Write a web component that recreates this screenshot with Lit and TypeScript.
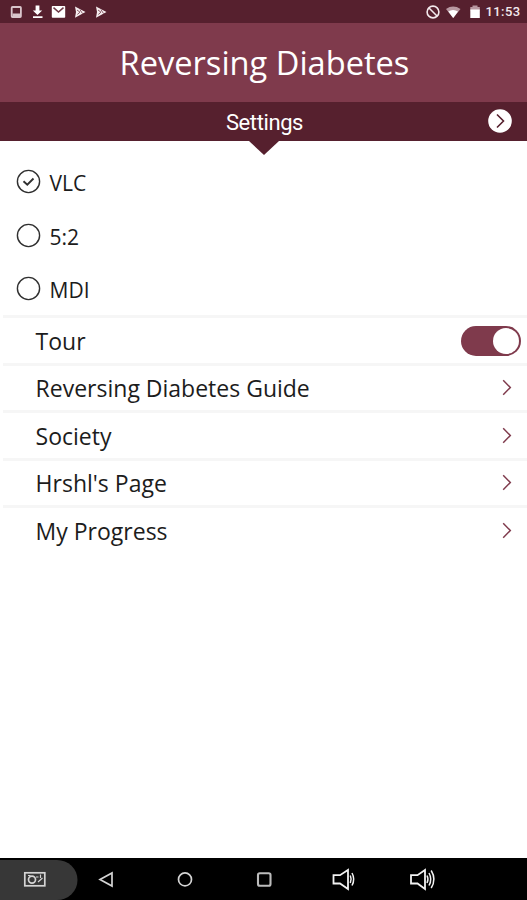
import { LitElement, html, css, svg } from "lit";
import { customElement, state } from "lit/decorators.js";

const chevron = svg`<path d="M1.200 1.300 L8.300 8.500 L1.200 15.700" fill="none" stroke="currentColor" stroke-width="1.5"/>`;

@customElement("status-bar")
class StatusBar extends LitElement {
  static styles = css`
    :host { display: block; height: 23px; background: #56202e; }
    svg { display: block; }
    .time { font: 500 13px Roboto, sans-serif; letter-spacing: 0.35px; fill: #f3e9ec; }
  `;
  render() {
    return html`<svg width="527" height="23" viewBox="0 0 527 23">
      <rect x="11.7" y="7" width="9.2" height="10" rx="0.8" fill="none" stroke="#d9c5cb" stroke-width="1.8"/>
      <path d="M12.500 13.500 h7.500 v2.500 h-7.500z" fill="#d9c5cb"/>
      <path d="M35.6 5.5h3.8v5h2.8l-4.7 4.6-4.7-4.6h2.8z M33 16.2h9.5v1.8H33z" fill="#fff"/>
      <rect x="51.8" y="6" width="13.4" height="11.8" rx="0.8" fill="#fff"/>
      <path d="M53.5 7.6 L58.5 12 L63.5 7.6" fill="none" stroke="#6d3846" stroke-width="1.5"/>
      ${[74.5, 95.5].map((x) => svg`<g transform="translate(${x} 6)">
        <path d="M0.5 0.5 L11 6 L0.5 11.8 L1.5 6z" fill="#f6eef0"/>
        <path d="M2.5 4 L5.5 6.2 L2.8 8.5 M5.5 3.7 L8 7.6" fill="none" stroke="#6d3846" stroke-width="0.8"/>
      </g>`)}
      <circle cx="433" cy="12" r="5.9" fill="none" stroke="#f3e9ec" stroke-width="1.6"/>
      <path d="M429 8 L437 16" stroke="#f3e9ec" stroke-width="1.6"/>
      <path d="M446 9 Q453 4.200 460.500 9 L453.200 18z" fill="#b898a1"/>
      <path d="M448.300 11.500 Q453 8.500 458 11.500 L453.200 18z" fill="#fff"/>
      <path d="M472.500 5.500h5v1.500h2.300v3.500h-9.500v-3.500h2.200z" fill="#b898a1"/>
      <rect x="470.300" y="9.500" width="9.500" height="8.500" fill="#fff"/>
      <text class="time" x="485.500" y="16.300" textLength="35">11:53</text>
    </svg>`;
  }
}

@customElement("nav-bar")
class NavBar extends LitElement {
  static styles = css`
    :host { display: block; height: 42px; background: #000; }
    svg { display: block; }
  `;
  render() {
    return html`<svg width="527" height="42" viewBox="0 0 527 42" fill="none" stroke="#d4d4d4" stroke-width="1.7">
      <path d="M0 2 H57 A20.500 20 0 0 1 57 42 H0z" fill="#373737" stroke="none"/>
      <rect x="24.800" y="14.800" width="20" height="13"/>
      <circle cx="32" cy="21.600" r="3.500"/>
      <path d="M28 17.500h2.500 M36 19h2.500 M40.500 16.500v3.500 M38 24l4.500-4" stroke-width="1.200"/>
      <path d="M112 15 V28 L100 21.500z"/>
      <circle cx="185" cy="21.400" r="6.500"/>
      <rect x="258" y="15.200" width="12.500" height="12.500" rx="1.800" stroke-width="2.100" stroke="#bcbcbc"/>
      <g stroke="#f2f2f2" stroke-width="1.800">
        <path d="M333.500 17.200 H340 L348 12 V31 L340 25.500 H333.500z"/>
        <path d="M350.300 17.500 Q352 21.300 350.300 25" stroke-width="1.500"/>
        <path d="M352 15 Q355.400 21.300 352 27.500" stroke-width="1.500"/>
        <path d="M411 17.200 H417.500 L425 12 V31 L417.500 25.500 H411z"/>
        <path d="M427 17.500 Q429 21.300 427 25 M429 15 Q432.500 21.300 429 27.500 M431.200 12.500 Q436.600 21.300 431.200 30" stroke-width="1.500"/>
      </g>
    </svg>`;
  }
}

@customElement("app-root")
class AppRoot extends LitElement {
  static styles = css`
    :host {
      display: flex; flex-direction: column; box-sizing: border-box;
      width: 527px; height: 900px; overflow: hidden; background: #fff;
      font-family: "Open Sans", "Noto Sans", sans-serif; color: #1c1c1c;
    }
    svg { display: block; flex: none; }
    .title {
      height: 79px; display: flex; align-items: center; justify-content: center;
      background: #7f3a4c; color: #fff; font-size: 32.600px; line-height: 1;
    }
    .title span { padding: 2px 0 0 2px; }
    .bar {
      position: relative; height: 39px; display: grid; grid-template-columns: 1fr auto 1fr;
      align-items: center; background: #56202e; color: #fff;
      font: 22px/1 Roboto, sans-serif; letter-spacing: -0.4px;
    }
    .bar .label { grid-column: 2; padding: 3px 0 0 2px; }
    .bar .go { justify-self: end; margin: 0 15px 1px 0; }
    .bar::after {
      content: ""; position: absolute; top: 100%; left: 249px;
      border: solid transparent; border-width: 14px 15px 0; border-top-color: #56202e;
    }
    .radios { height: 174px; padding-top: 14px; box-sizing: border-box; }
    .radio {
      height: 53.500px; display: flex; align-items: center; gap: 8.500px; padding-left: 16px;
      font-size: 21px; line-height: 1;
    }
    .radio span { padding-top: 4px; }
    .row {
      height: 47.500px; box-sizing: border-box; margin-left: 3px; padding: 0 15px 0 32.600px;
      border-top: 3px solid #f6f6f6; display: flex; align-items: center;
      justify-content: space-between; font-size: 23px; line-height: 1;
    }
    .row span { padding-top: 2px; }
    .row svg { color: #7f3a4c; }
    .row.tour { padding-right: 6px; }
    .toggle {
      width: 60px; height: 30px; box-sizing: border-box; padding: 2px; border-radius: 15px; margin-top: 1px;
      background: #7f3a4c; display: flex; justify-content: flex-end;
    }
    .knob { width: 26px; height: 26px; border-radius: 50%; background: #fff; }
    .space { flex: 1; }
  `;

  @state() private plan = "VLC";

  render() {
    return html`
      <status-bar></status-bar>
      <header class="title"><span>Reversing Diabetes</span></header>
      <div class="bar">
        <span class="label">Settings</span>
        <svg class="go" width="24" height="24" viewBox="0 0 24 24">
          <circle cx="12" cy="12" r="11.800" fill="#fff"/>
          <path d="M9 5.500 L15.500 12 L9 18.500" fill="none" stroke="#56202e" stroke-width="1.600"/>
        </svg>
      </div>
      <div class="radios">
        ${["VLC", "5:2", "MDI"].map((name) => html`
          <div class="radio" @click=${() => (this.plan = name)}>
            <svg width="25" height="25" viewBox="0 0 25 25" fill="none" stroke="#303030">
              <circle cx="12.500" cy="12.500" r="11.100" stroke-width="1.400"/>
              ${this.plan === name ? svg`<path d="M7.500 12.200 L11.300 15.700 L17.500 9.500" stroke-width="1.900"/>` : ""}
            </svg>
            <span>${name}</span>
          </div>`)}
      </div>
      <div class="row tour"><span>Tour</span><div class="toggle"><div class="knob"></div></div></div>
      ${["Reversing Diabetes Guide", "Society", "Hrshl's Page", "My Progress"].map((name) => html`
        <div class="row"><span>${name}</span><svg width="10" height="17" viewBox="0 0 10 17">${chevron}</svg></div>`)}
      <div class="space"></div>
      <nav-bar></nav-bar>
    `;
  }
}
